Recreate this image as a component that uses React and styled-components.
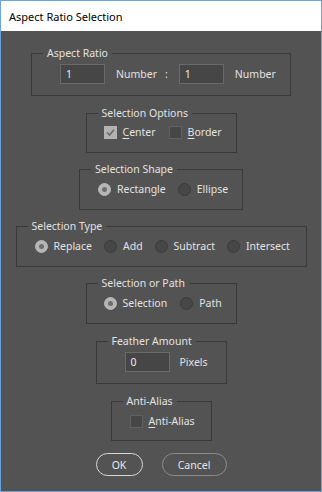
import React from "react";
import styled, { createGlobalStyle } from "styled-components";

const Global = createGlobalStyle`
  html, body { margin: 0; padding: 0; background: #535353; }
  body { font-family: "Noto Sans", "Open Sans", sans-serif; }
`;

const Window = styled.div`
  width: 322px;
  height: 492px;
  box-sizing: border-box;
  border: 1px solid #6aa3dd;
  display: flex;
  flex-direction: column;
  background: #535353;
  overflow: hidden;
`;

const TitleBar = styled.div`
  height: 30px;
  flex: none;
  background: #ffffff;
  display: flex;
  align-items: center;
  padding-left: 8px;
  font-size: 11px;
  color: #000;
`;

const Body = styled.div`
  flex: 1;
  display: flex;
  flex-direction: column;
  align-items: center;
  padding-top: 22px;
  color: #e2e2e2;
  font-size: 10.5px;
`;

const Group = styled.div`
  width: ${(p) => p.$w}px;
  box-sizing: border-box;
  margin-top: ${(p) => p.$mt || 0}px;
  padding-bottom: ${(p) => p.$pb}px;
  border: 1px solid #393939;
  display: flex;
  flex-direction: column;
`;

const Legend = styled.div`
  align-self: flex-start;
  margin: -8px 0 0 11px;
  padding: 0 4px;
  height: 15px;
  line-height: 15px;
  background: #535353;
  white-space: nowrap;
`;

const Row = styled.div`
  display: flex;
  align-items: center;
  margin-top: ${(p) => p.$mt}px;
  padding-left: ${(p) => p.$pl}px;
  gap: ${(p) => p.$gap ?? 13}px;
  height: ${(p) => p.$h || 15}px;
  line-height: 15px;
  white-space: nowrap;
`;

const Option = styled.label`
  display: flex;
  align-items: center;
  gap: 6px;
  flex: none;
`;

const Field = styled.div`
  width: 45px;
  height: 20px;
  flex: none;
  box-sizing: border-box;
  background: #464646;
  border: 1px solid #6a6a6a;
  padding-left: 5px;
  line-height: 18px;
  color: #ececec;
  margin-left: ${(p) => p.$ml || 0}px;
`;

const Text = styled.span`
  flex: none;
  margin-left: ${(p) => p.$ml || 0}px;
`;

const Box = styled.span`
  width: 13px;
  height: 13px;
  box-sizing: border-box;
  flex: none;
  border: 1px solid ${(p) => (p.$on ? "#b4b4b4" : "#616161")};
  background: ${(p) => (p.$on ? "#b2b2b2" : "#474747")};
  display: flex;
  align-items: center;
  justify-content: center;
`;

const Radio = styled.span`
  width: 13px;
  height: 13px;
  box-sizing: border-box;
  flex: none;
  border-radius: 50%;
  border: 1px solid ${(p) => (p.$on ? "#b6b6b6" : "#3a3a3a")};
  background: ${(p) => (p.$on ? "#b6b6b6" : "#474747")};
  display: flex;
  align-items: center;
  justify-content: center;
`;

const Dot = styled.span`
  width: 5px;
  height: 5px;
  border-radius: 50%;
  background: #6e6e6e;
`;

const U = styled.span`
  text-decoration: underline;
  text-underline-offset: 2px;
`;

const Buttons = styled.div`
  display: flex;
  gap: 19px;
  margin-top: 12px;
`;

const Button = styled.button`
  height: 23px;
  width: ${(p) => p.$w}px;
  border-radius: 12px;
  background: #535353;
  border: 1px solid ${(p) => (p.$primary ? "#d8d8d8" : "#8c8c8c")};
  color: #e6e6e6;
  font-family: inherit;
  font-size: 10.5px;
  padding: 0;
`;

const Check = ({ on }) => (
  <Box $on={on}>
    {on && (
      <svg width="9" height="9" viewBox="0 0 9 9">
        <path d="M1 4.5 L3.5 7 L8 1.8" stroke="#6c6c6c" strokeWidth="1.6" fill="none" />
      </svg>
    )}
  </Box>
);

const Rad = ({ on }) => <Radio $on={on}>{on && <Dot />}</Radio>;

export default function App() {
  return (
    <>
      <Global />
      <Window>
        <TitleBar>Aspect Ratio Selection</TitleBar>
        <Body>
          <Group $w={260} $pb={11}>
            <Legend>Aspect Ratio</Legend>
            <Row $mt={3} $pl={28} $h={20} $gap={0}>
              <Field>1</Field>
              <Text $ml={11}>Number</Text>
              <Text $ml={8}>:</Text>
              <Field $ml={11}>1</Field>
              <Text $ml={11}>Number</Text>
            </Row>
          </Group>

          <Group $w={151} $mt={17} $pb={12}>
            <Legend>Selection Options</Legend>
            <Row $mt={4} $pl={17}>
              <Option>
                <Check on />
                <span><U>C</U>enter</span>
              </Option>
              <Option>
                <Check />
                <span><U>B</U>order</span>
              </Option>
            </Row>
          </Group>

          <Group $w={164} $mt={16} $pb={12}>
            <Legend>Selection Shape</Legend>
            <Row $mt={5} $pl={18} $gap={12}>
              <Option>
                <Rad on />
                <span>Rectangle</span>
              </Option>
              <Option>
                <Rad />
                <span>Ellipse</span>
              </Option>
            </Row>
          </Group>

          <Group $w={291} $mt={16} $pb={12}>
            <Legend>Selection Type</Legend>
            <Row $mt={5} $pl={18} $gap={12}>
              <Option>
                <Rad on />
                <span>Replace</span>
              </Option>
              <Option>
                <Rad />
                <span>Add</span>
              </Option>
              <Option>
                <Rad />
                <span>Subtract</span>
              </Option>
              <Option>
                <Rad />
                <span>Intersect</span>
              </Option>
            </Row>
          </Group>

          <Group $w={151} $mt={16} $pb={12}>
            <Legend>Selection or Path</Legend>
            <Row $mt={5} $pl={17}>
              <Option>
                <Rad on />
                <span>Selection</span>
              </Option>
              <Option>
                <Rad />
                <span>Path</span>
              </Option>
            </Row>
          </Group>

          <Group $w={131} $mt={17} $pb={11}>
            <Legend>Feather Amount</Legend>
            <Row $mt={3} $pl={28} $h={20} $gap={10}>
              <Field>0</Field>
              <span>Pixels</span>
            </Row>
          </Group>

          <Group $w={101} $mt={17} $pb={11}>
            <Legend>Anti-Alias</Legend>
            <Row $mt={5} $pl={18}>
              <Option>
                <Check />
                <span><U>A</U>nti-Alias</span>
              </Option>
            </Row>
          </Group>

          <Buttons>
            <Button $w={47} $primary>OK</Button>
            <Button $w={65}>Cancel</Button>
          </Buttons>
        </Body>
      </Window>
    </>
  );
}
